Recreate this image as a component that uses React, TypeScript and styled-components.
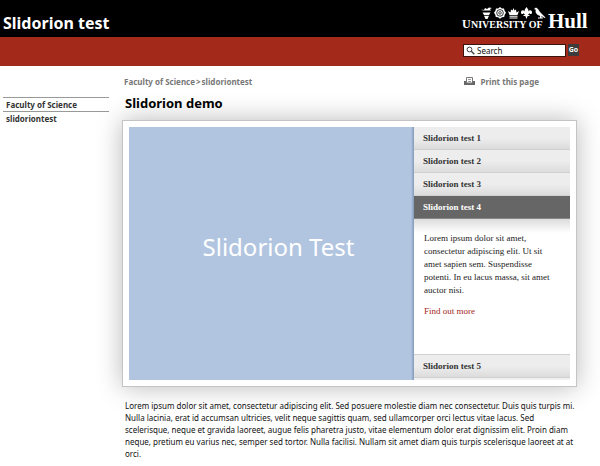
import React, { useState } from "react";
import styled, { createGlobalStyle } from "styled-components";

const sans = `"Noto Sans", "Open Sans", sans-serif`;
const serif = `"Liberation Serif", serif`;

const GlobalStyle = createGlobalStyle`
  *, *::before, *::after { box-sizing: border-box; }
  body { margin: 0; background: #fff; color: #111; font-family: ${sans}; }
  h1, h2, h3, p, ul { margin: 0; padding: 0; }
  a { color: inherit; text-decoration: none; }
  button, input { font: inherit; border-radius: 0; }
`;

const Header = styled.header`
  display: flex;
  justify-content: space-between;
  height: 37px;
  padding: 0 11px 0 3px;
  background: #000;
  color: #fff;
`;

const SiteTitle = styled.h1`
  padding-top: 12px;
  font-size: 16px;
  line-height: 22px;
  font-weight: 700;
`;

const LogoLink = styled.a`
  display: block;
  padding-top: 6px;
`;

const SearchBar = styled.div`
  height: 29px;
  padding: 7px 21px 0 0;
  background: #a3291b;
`;

const SearchForm = styled.form`
  display: flex;
  justify-content: flex-end;
  gap: 2px;
`;

const SearchField = styled.label`
  display: flex;
  align-items: center;
  gap: 2px;
  width: 103px;
  height: 13px;
  padding-left: 2px;
  border: 1px solid #3a1510;
  background: #fff;
  color: #111;
`;

const SearchInput = styled.input`
  flex: 1;
  min-width: 0;
  height: 11px;
  padding: 0;
  border: 0;
  outline: 0;
  background: transparent;
  color: #111;
  font-size: 8px;
  line-height: 11px;
  &::placeholder { color: #111; opacity: 1; }
`;

const GoButton = styled.button`
  display: flex;
  align-items: center;
  justify-content: center;
  width: 11px;
  height: 12px;
  padding: 0;
  border: 0;
  background: #3c3c3c;
  color: #fff;
  font-size: 7px;
  line-height: 12px;
  font-weight: 700;
`;

const Page = styled.div`
  display: grid;
  grid-template-columns: 106px minmax(0, 1fr);
  column-gap: 13px;
  padding: 0 23px 0 3px;
`;

const SideNav = styled.nav`
  padding-top: 31px;
  font-size: 8px;
  line-height: 13px;
  font-weight: 700;
  color: #333;
  ul { list-style: none; }
`;

const NavItem = styled.li<{ $ruled?: boolean }>`
  padding-left: 3px;
  border-style: solid;
  border-color: #999;
  border-width: ${(p) => (p.$ruled ? "1px 0" : "0")};
`;

const TopLine = styled.div`
  display: flex;
  justify-content: space-between;
  padding: 9px 38px 0 2px;
  color: #777;
  font-size: 8px;
  line-height: 13px;
  font-weight: 700;
`;

const Crumbs = styled.nav`
  display: flex;
  gap: 1px;
`;

const PrintLink = styled.a`
  display: flex;
  align-items: center;
  gap: 5px;
`;

const PageHeading = styled.h2`
  padding: 6px 0 7px 3px;
  color: #000;
  font-size: 13px;
  line-height: 19px;
  font-weight: 700;
`;

const Slidorion = styled.section`
  display: flex;
  height: 267px;
  padding: 6px;
  border: 1px solid #c4c4c4;
  background: #fff;
  box-shadow: 0 0 24px rgba(0, 0, 0, 0.28);
`;

const Slide = styled.div`
  display: flex;
  flex: 1;
  align-items: center;
  justify-content: center;
  padding-bottom: 14px;
  padding-left: 14px;
  background: linear-gradient(to left, #8299bb, #b2c5e0 3px);
  color: #fff;
  font-size: 24px;
  line-height: 30px;
`;

const Accordion = styled.div`
  display: flex;
  flex-direction: column;
  width: 156px;
  padding-bottom: 2px;
  background: #f0f0f0;
  font-family: ${serif};
`;

const AccordionHeader = styled.button<{ $open: boolean }>`
  display: block;
  width: 100%;
  height: 23px;
  padding: 0 9px;
  border: 0;
  border-bottom: 1px solid ${(p) => (p.$open ? "#888" : "#d0d0d0")};
  background: ${(p) =>
    p.$open ? "#666" : "linear-gradient(#ededed 50%, #dcdcdc)"};
  color: ${(p) => (p.$open ? "#fff" : "#333")};
  font-size: 9px;
  line-height: 20px;
  font-weight: 700;
  text-align: left;
  cursor: pointer;
`;

const AccordionPanel = styled.div`
  flex: 1;
  padding: 13px 14px 0 10px;
  border-bottom: 1px solid #d0d0d0;
  background: linear-gradient(#dcdcdc, #fff 14px);
  color: #222;
  font-size: 9px;
  line-height: 13px;
`;

const MoreLink = styled.a`
  display: inline-block;
  margin-top: 8px;
  color: #a3291b;
`;

const Copy = styled.p`
  padding: 13px 0 0 3px;
  font-size: 8px;
  line-height: 12px;
`;

const Logo = () => (
  <svg width="128" height="28" viewBox="0 0 128 28" role="img" aria-label="University of Hull" fill="#fff">
    <g transform="translate(20 1)">
      <path d="M0 2.500L3 3l1-2 2 1 2-1.500 3 .5-2 1 1 1.500H2zM1.500 5.500h8L8 8H3zM3 8.800h5L6.500 12h-2z" />
    </g>
    <g transform="translate(33 1)">
      <path d="M6 0l1.800 1.500L10 1.400l.6 2.300L12 5.800l-1.300 2-.5 2.300-2.300.1L6 11.800 4.100 10.200 1.800 10.100 1.300 7.800 0 5.800 1.400 3.700 2 1.400l2.200.1z" />
      <circle cx="6" cy="5.900" r="3.300" fill="none" stroke="#000" strokeWidth=".8" />
      <circle cx="6" cy="5.900" r="1.300" fill="none" stroke="#000" strokeWidth=".7" />
    </g>
    <g transform="translate(47 1)">
      <path d="M0 4l2.500 1.500L3 2.500l1.500 1L5.500 1l1 2.500 1.500-1 .5 3L11 4 9.500 8h-8zM1.500 8.700h8v1h-8zM1.500 10.400h8v1.200h-8z" />
    </g>
    <g transform="translate(60 1)">
      <path d="M5.500 0L7.500 3 6.500 6.500C7 2.500 11 2.500 11 5.500c0 2-2.500 2-2.500.5L7 8h1.500v1H6.700L5.500 12 4.300 9H2.500V8H4L2.500 6C2.500 7.500 0 7.500 0 5.500c0-3 4-3 4.500 1L3.500 3z" />
    </g>
    <g transform="translate(73 1)">
      <path d="M0 2l2-1.500 2 1.500 2 3 5.500 5.500-1 .5-3-2v1.500H9v1H4v-1h2V9L3 7.500 1.500 5 1.800 2.800z" />
    </g>
    <g fontFamily='"Liberation Serif", serif' fontWeight="700">
      <text x="1" y="22" fontSize="12">U</text>
      <text x="10" y="22" fontSize="10">NIVERSITY OF</text>
      <text x="87" y="22" fontSize="21">Hull</text>
    </g>
  </svg>
);

const SearchIcon = () => (
  <svg width="9" height="9" viewBox="0 0 9 9" fill="none" stroke="#444" aria-hidden="true">
    <circle cx="3.500" cy="3.500" r="2.400" />
    <path d="M5.300 5.300L8.300 8.300" strokeWidth="1.400" />
  </svg>
);

const PrintIcon = () => (
  <svg width="11" height="9" viewBox="0 0 11 9" aria-hidden="true">
    <path d="M0 4h2v2h7V4h2v4H0z" fill="#666" />
    <path d="M2.500 6V.5h6V6z" fill="#fff" stroke="#777" />
    <path d="M4 2.500h3M4 4.500h3" stroke="#999" />
  </svg>
);

const blurb =
  "Lorem ipsum dolor sit amet, consectetur adipiscing elit. Ut sit amet sapien sem. Suspendisse potenti. In eu lacus massa, sit amet auctor nisi.";

const sections = [1, 2, 3, 4, 5].map((n) => ({ id: n, title: `Slidorion test ${n}` }));

export default function App() {
  const [open, setOpen] = useState(4);
  return (
    <>
      <GlobalStyle />
      <Header>
        <SiteTitle>Slidorion test</SiteTitle>
        <LogoLink href="#home"><Logo /></LogoLink>
      </Header>
      <SearchBar>
        <SearchForm role="search" onSubmit={(e) => e.preventDefault()}>
          <SearchField>
            <SearchIcon />
            <SearchInput type="text" placeholder="Search" aria-label="Search" />
          </SearchField>
          <GoButton type="submit">Go</GoButton>
        </SearchForm>
      </SearchBar>
      <Page>
        <SideNav>
          <ul>
            <NavItem $ruled><a href="#science">Faculty of Science</a></NavItem>
            <NavItem><a href="#slidoriontest">slidoriontest</a></NavItem>
          </ul>
        </SideNav>
        <main>
          <TopLine>
            <Crumbs aria-label="Breadcrumb">
              <a href="#science">Faculty of Science</a>
              <span>&gt;</span>
              <a href="#slidoriontest">slidoriontest</a>
            </Crumbs>
            <PrintLink href="#print"><PrintIcon />Print this page</PrintLink>
          </TopLine>
          <PageHeading>Slidorion demo</PageHeading>
          <Slidorion>
            <Slide>Slidorion Test</Slide>
            <Accordion>
              {sections.map((s) => (
                <React.Fragment key={s.id}>
                  <AccordionHeader
                    type="button"
                    $open={open === s.id}
                    aria-expanded={open === s.id}
                    onClick={() => setOpen(s.id)}
                  >
                    {s.title}
                  </AccordionHeader>
                  {open === s.id && (
                    <AccordionPanel>
                      <p>{blurb}</p>
                      <MoreLink href="#more">Find out more</MoreLink>
                    </AccordionPanel>
                  )}
                </React.Fragment>
              ))}
            </Accordion>
          </Slidorion>
          <Copy>
            Lorem ipsum dolor sit amet, consectetur adipiscing elit. Sed posuere molestie diam nec
            consectetur. Duis quis turpis mi. Nulla lacinia, erat id accumsan ultricies, velit neque
            sagittis quam, sed ullamcorper orci lectus vitae lacus. Sed scelerisque, neque et gravida
            laoreet, augue felis pharetra justo, vitae elementum dolor erat dignissim elit. Proin diam
            neque, pretium eu varius nec, semper sed tortor. Nulla facilisi. Nullam sit amet diam quis
            turpis scelerisque laoreet at at orci.
          </Copy>
        </main>
      </Page>
    </>
  );
}
